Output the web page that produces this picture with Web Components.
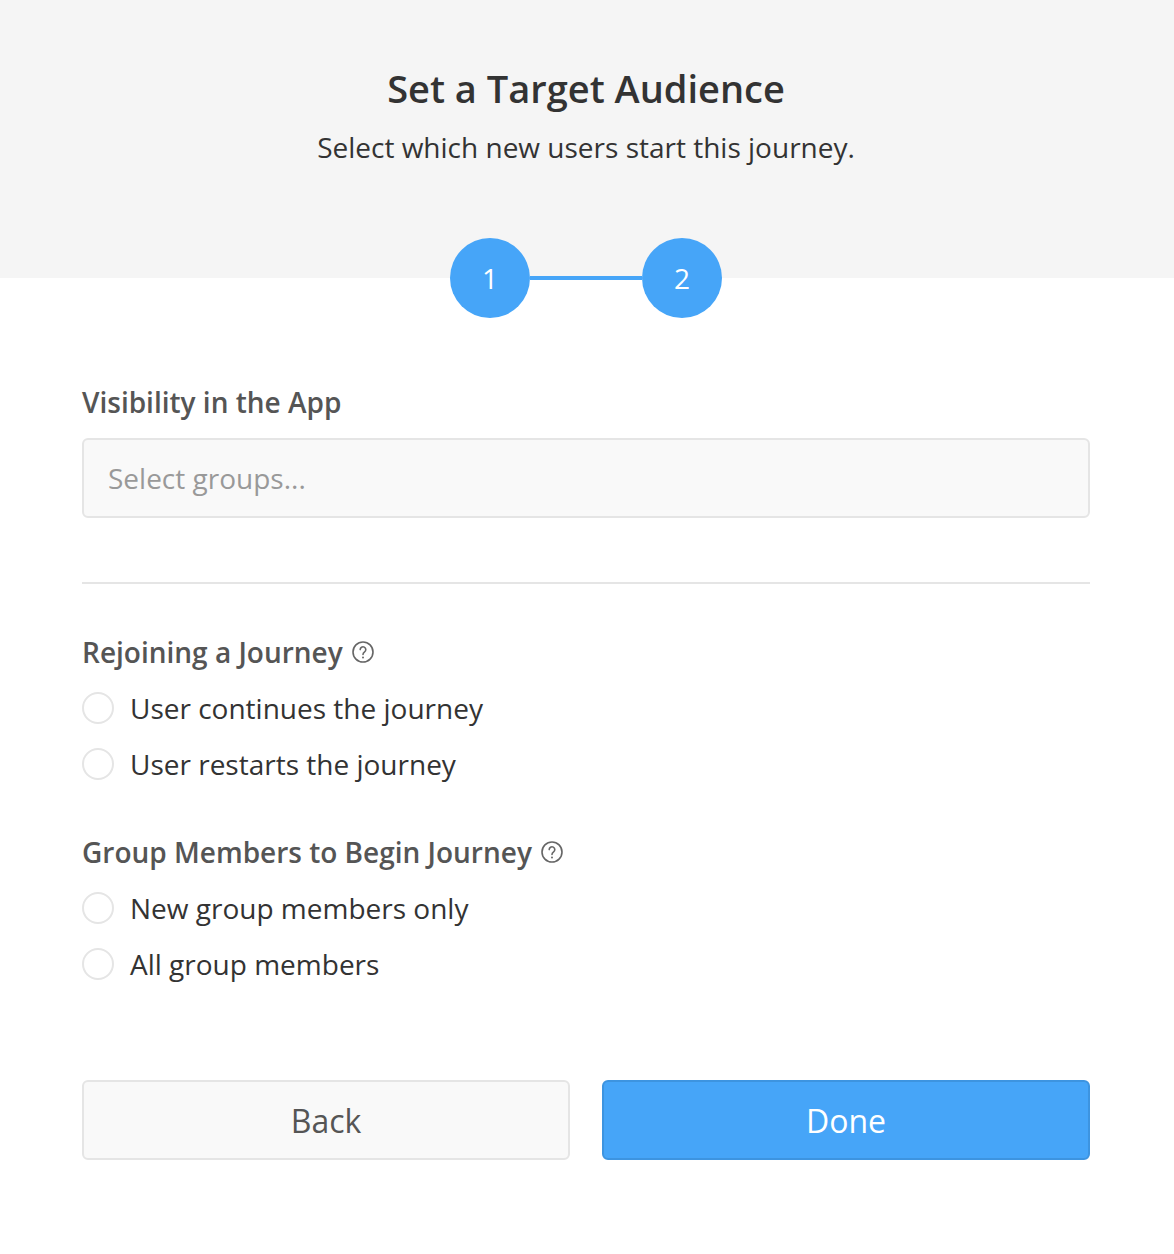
<!DOCTYPE html>
<html>
<head>
<meta charset="utf-8">
<title>Set a Target Audience</title>
<style>
  html, body { margin: 0; padding: 0; background: #fff; }
  body { font-family: "Open Sans", sans-serif; color: #333; }
  .content { display: block; margin: 0 84px 0 82px; }
</style>
</head>
<body>
<audience-header heading="Set a Target Audience" sub="Select which new users start this journey."></audience-header>
<step-line></step-line>
<div class="content">
  <group-select label="Visibility in the App" placeholder="Select groups..."></group-select>
  <radio-group label="Rejoining a Journey" top="52">
    <radio-row>User continues the journey</radio-row>
    <radio-row>User restarts the journey</radio-row>
  </radio-group>
  <radio-group label="Group Members to Begin Journey" top="52">
    <radio-row>New group members only</radio-row>
    <radio-row>All group members</radio-row>
  </radio-group>
  <action-bar></action-bar>
</div>

<script>
(function() {
'use strict';

customElements.define('audience-header', class extends HTMLElement {
  constructor() {
    super();
    let root = this.attachShadow({mode: 'open'});
    root.innerHTML = `
      <style>
        :host { display: block; height: 278px; background: #f5f5f5; box-sizing: border-box; padding: 62px 2px 0 0; text-align: center; }
        h1 { margin: 0; font-size: 38px; line-height: 52px; font-weight: 600; color: #333; }
        p { margin: 14px 0 0; font-size: 28px; line-height: 38px; color: #333; }
      </style>
      <h1></h1>
      <p></p>
    `;
    root.querySelector('h1').textContent = this.getAttribute('heading');
    root.querySelector('p').textContent = this.getAttribute('sub');
  }
});

customElements.define('step-line', class extends HTMLElement {
  constructor() {
    super();
    this.attachShadow({mode: 'open'}).innerHTML = `
      <style>
        :host { display: flex; justify-content: center; align-items: center; margin: -40px 2px 0 0; }
        .dot { width: 80px; height: 80px; border-radius: 50%; background: #46a5f8; color: #fff; display: flex; align-items: center; justify-content: center; font-size: 28px; }
        .bar { width: 112px; height: 4px; background: #46a5f8; }
      </style>
      <div class="dot">1</div>
      <div class="bar"></div>
      <div class="dot">2</div>
    `;
  }
});

customElements.define('group-select', class extends HTMLElement {
  constructor() {
    super();
    let root = this.attachShadow({mode: 'open'});
    root.innerHTML = `
      <style>
        :host { display: block; padding: 64px 0 64px; border-bottom: 2px solid #e5e5e5; }
        label { display: block; font-size: 28px; line-height: 40px; font-weight: 600; color: #555; }
        .input { margin-top: 16px; height: 80px; box-sizing: border-box; border: 2px solid #e5e5e5; border-radius: 6px; background: #f9f9f9; padding: 0 24px; display: flex; align-items: center; font-size: 28px; color: #999; }
      </style>
      <label></label>
      <div class="input"></div>
    `;
    root.querySelector('label').textContent = this.getAttribute('label');
    root.querySelector('.input').textContent = this.getAttribute('placeholder');
  }
});

customElements.define('radio-group', class extends HTMLElement {
  constructor() {
    super();
    let root = this.attachShadow({mode: 'open'});
    root.innerHTML = `
      <style>
        :host { display: block; margin-top: 48px; }
        .title { display: flex; align-items: center; gap: 8px; font-size: 28px; line-height: 40px; font-weight: 600; color: #555; }
        svg { width: 24px; height: 24px; flex: none; }
        .rows { display: flex; flex-direction: column; gap: 16px; margin-top: 16px; }
      </style>
      <div class="title">
        <span></span>
        <svg viewBox="0 0 24 24" fill="none">
          <circle cx="12" cy="12" r="10" stroke="#666" stroke-width="1.6"/>
          <path d="M9.2 9.6a2.8 2.8 0 1 1 4.4 2.3c-1 .7-1.6 1.2-1.6 2.5" stroke="#666" stroke-width="1.6" stroke-linecap="round"/>
          <circle cx="12" cy="17.4" r="1" fill="#666"/>
        </svg>
      </div>
      <div class="rows"><slot></slot></div>
    `;
    root.querySelector('span').textContent = this.getAttribute('label');
  }
});

customElements.define('radio-row', class extends HTMLElement {
  constructor() {
    super();
    this.attachShadow({mode: 'open'}).innerHTML = `
      <style>
        :host { display: flex; align-items: center; gap: 16px; height: 40px; font-size: 28px; color: #333; }
        .circle { width: 32px; height: 32px; box-sizing: border-box; border: 2px solid #e5e5e5; border-radius: 50%; background: #fff; flex: none; }
      </style>
      <div class="circle"></div>
      <slot></slot>
    `;
  }
});

customElements.define('action-bar', class extends HTMLElement {
  constructor() {
    super();
    this.attachShadow({mode: 'open'}).innerHTML = `
      <style>
        :host { display: grid; grid-template-columns: 1fr 1fr; gap: 32px; margin-top: 96px; padding-bottom: 94px; }
        div { height: 80px; box-sizing: border-box; border-radius: 6px; display: flex; align-items: center; justify-content: center; font-size: 32px; }
        .back { background: #f9f9f9; border: 2px solid #e5e5e5; color: #555; }
        .done { background: #46a5f8; border: 2px solid #3d94e0; color: #fff; }
      </style>
      <div class="back">Back</div>
      <div class="done">Done</div>
    `;
  }
});

})();
</script>
</body>
</html>
